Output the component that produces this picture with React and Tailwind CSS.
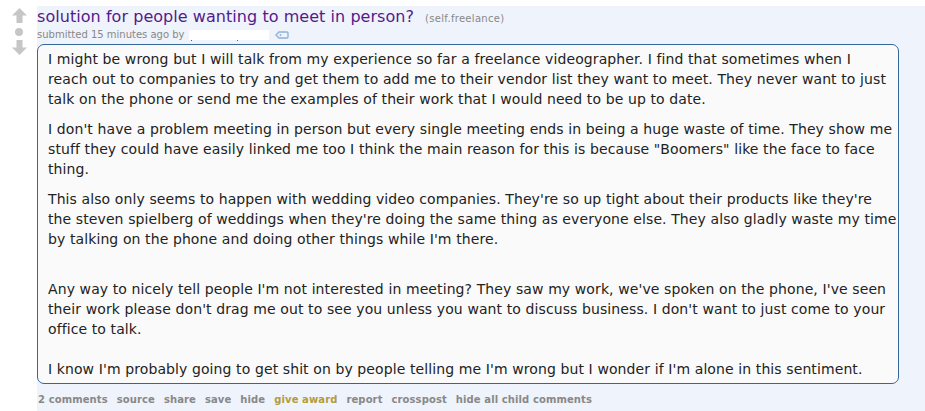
import { Fragment } from "react";

const font = { fontFamily: '"DejaVu Sans", Verdana, sans-serif' };

const links = [
  "2 comments",
  "source",
  "share",
  "save",
  "hide",
  "give award",
  "report",
  "crosspost",
  "hide all child comments",
];

// lines broken where the original post wraps
const paragraphs = [
  [
    "I might be wrong but I will talk from my experience so far a freelance videographer. I find that sometimes when I",
    "reach out to companies to try and get them to add me to their vendor list they want to meet. They never want to just",
    "talk on the phone or send me the examples of their work that I would need to be up to date.",
  ],
  [
    "I don't have a problem meeting in person but every single meeting ends in being a huge waste of time. They show me",
    'stuff they could have easily linked me too I think the main reason for this is because "Boomers" like the face to face',
    "thing.",
  ],
  [
    "This also only seems to happen with wedding video companies. They're so up tight about their products like they're",
    "the steven spielberg of weddings when they're doing the same thing as everyone else. They also gladly waste my time",
    "by talking on the phone and doing other things while I'm there.",
  ],
  [
    "",
    "Any way to nicely tell people I'm not interested in meeting? They saw my work, we've spoken on the phone, I've seen",
    "their work please don't drag me out to see you unless you want to discuss business. I don't want to just come to your",
    "office to talk.",
    "",
    "I know I'm probably going to get shit on by people telling me I'm wrong but I wonder if I'm alone in this sentiment.",
  ],
];

function Arrow({ down }) {
  return (
    <svg width="15" height="15" viewBox="0 0 15 15" className={down ? "rotate-180" : ""}>
      <path d="M7.5 0 L15 7.5 L10.5 7.5 L10.5 15 L4.5 15 L4.5 7.5 L0 7.5 Z" fill="#c6c6c6" />
    </svg>
  );
}

export default function App() {
  return (
    <div className="flex min-h-[411px] bg-white pt-[6px] text-[#222]" style={font}>
      <div className="flex w-[37px] shrink-0 flex-col items-center pl-[1px] pt-[2px]">
        <Arrow />
        <div className="mt-[5px] h-[8px] w-[8px] rounded-full bg-[#c6c6c6]" />
        <div className="mt-[4px]">
          <Arrow down />
        </div>
      </div>

      <div className="flex-1 bg-[#eff3fb] pt-[1px]">
        <p className="flex items-baseline leading-[19px]">
          <span className="text-[16px] tracking-[0.05px] text-[#551a8b]">
            solution for people wanting to meet in person?
          </span>
          <span className="ml-[11px] text-[10px] tracking-[0.3px] text-[#888]">(self.freelance)</span>
        </p>

        <p className="flex items-center text-[10px] leading-[13px] text-[#888]">
          submitted 15 minutes ago by
          <span className="relative ml-[4px] h-[10px] w-[80px] bg-white">
            <span className="absolute bottom-[-1px] left-[2px] h-[1px] w-[1px] bg-[#369]" />
            <span className="absolute bottom-[-1px] left-[48px] h-[1px] w-[1px] bg-[#369]" />
          </span>
          <svg width="14" height="8" viewBox="0 0 14 8" className="ml-[6px]">
            <path
              d="M1 4 L4 1 L12 1 Q13 1 13 2 L13 6 Q13 7 12 7 L4 7 Z"
              fill="none"
              stroke="#8fb3d9"
              strokeWidth="1.4"
            />
            <circle cx="5.5" cy="4" r="1" fill="#8fb3d9" />
          </svg>
        </p>

        <div className="mt-[3px] w-[862px] rounded-[7px] border border-[#369] bg-[#fafafa] px-[10px] py-[4px] text-[14px] leading-[20px] tracking-[0.1px]">
          {paragraphs.map((lines, i) => (
            <p key={i} className={`whitespace-nowrap ${i > 0 ? "mt-[10px]" : ""}`}>
              {lines.map((line, j) => (
                <Fragment key={j}>
                  {j > 0 ? <br /> : null}
                  {line}
                </Fragment>
              ))}
            </p>
          ))}
        </div>

        <ul className="mt-[9px] flex gap-[9px] pl-[1px] text-[10px] font-bold leading-[14px] tracking-[0.1px] text-[#888]">
          {links.map((l) => (
            <li key={l} className={l === "give award" ? "text-[#b59b3c]" : ""}>
              {l}
            </li>
          ))}
        </ul>
      </div>
    </div>
  );
}
